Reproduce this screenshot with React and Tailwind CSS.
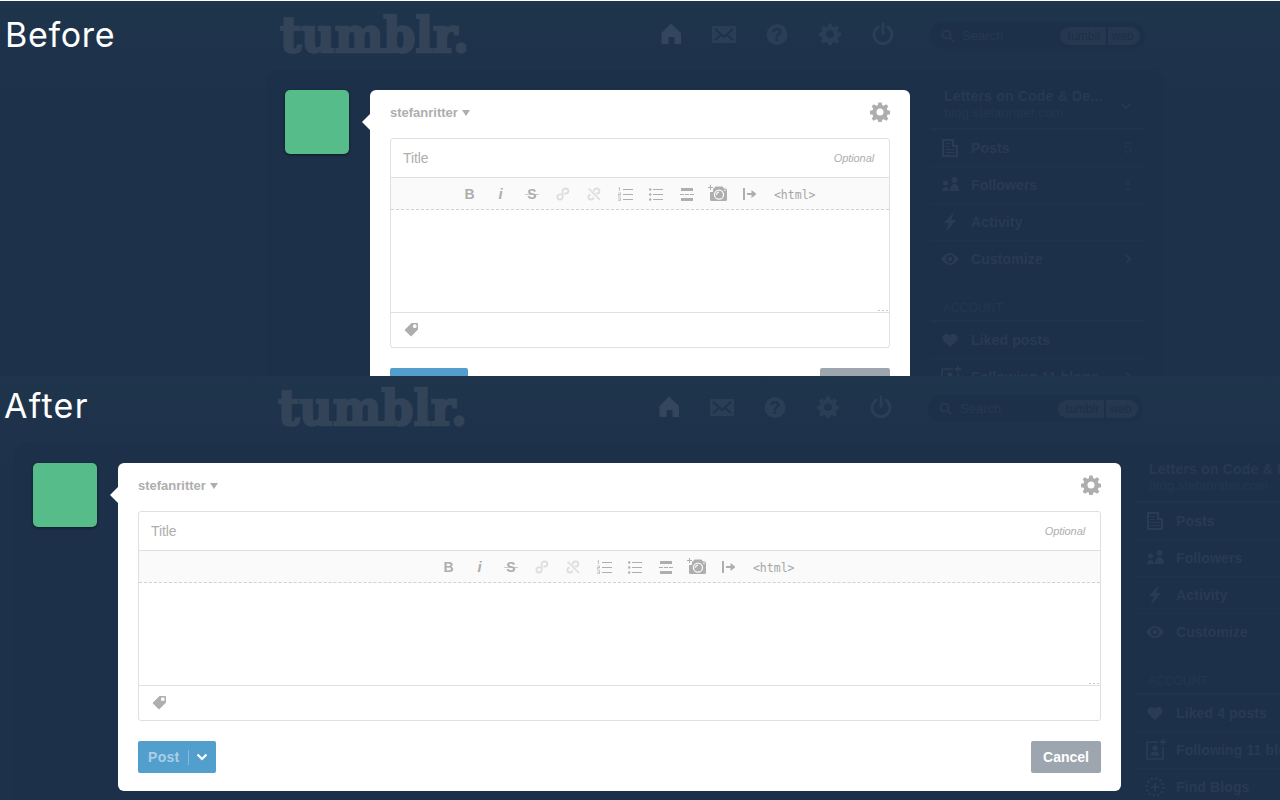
import React from "react";

const ink = "fill-[#2a3e56]";

function Svg({ w, h, className = "", children, viewBox }) {
  return (
    <svg width={w} height={h} viewBox={viewBox || `0 0 ${w} ${h}`} className={`block shrink-0 ${className}`}>
      {children}
    </svg>
  );
}

function Gear({ size, className }) {
  return (
    <Svg w={size} h={size} viewBox="-10 -10 20 20" className={className}>
      <path
        fillRule="evenodd"
        d="M-1.6-9.6h3.2l.6 2.8 1.5.6 2.5-1.6 2.1 2.1-1.5 2.5.6 1.5 2.8.6v3.2l-2.8.6-.6 1.5 1.5 2.5-2.1 2.1-2.5-1.6-1.5.6-.6 2.8h-3.2l-.6-2.8-1.5-.6-2.5 1.6-2.1-2.1 1.5-2.5-.6-1.5-2.8-.6v-3.2l2.8-.6.6-1.5-1.5-2.5 2.1-2.1 2.5 1.6 1.5-.6zM0-3.5a3.5 3.5 0 1 0 0 7a3.5 3.5 0 1 0 0-7z"
      />
    </Svg>
  );
}

function Header({ label, className, labelClass }) {
  return (
    <header className={`flex items-start ${className}`}>
      <h2 className={`w-[279px] shrink-0 text-[34px] leading-[44px] text-white font-['Inter',sans-serif] font-normal ${labelClass}`}>
        {label}
      </h2>
      <Svg w={192} h={60} className="fill-[#334459] stroke-[#334459]">
        <text x="1" y="51" textLength="189" lengthAdjust="spacingAndGlyphs" strokeWidth="2.400" className="text-[49px] font-bold font-['DejaVu_Serif',serif]">
          tumblr.
        </text>
      </Svg>
      <nav className="flex items-center ml-[188px] mt-[21px] h-6">
        <div className="w-[53px]">
          <Svg w={24} h={24} className="fill-[#34465d]">
            <path d="M12 1.500 22 11v11h-6.500v-7h-6v7H2.500V11z" />
          </Svg>
        </div>
        <div className="w-[53px]">
          <Svg w={24} h={24} className={ink}>
            <rect y="4" width="24" height="17" rx="1" />
            <path d="M3 7 12 15 21 7M3 18l6-5M21 18l-6-5" fill="none" stroke="#1e334b" strokeWidth="2" />
          </Svg>
        </div>
        <div className="w-[53px]">
          <Svg w={24} h={24} className={ink}>
            <circle cx="12" cy="12.500" r="10.500" />
            <text x="12" y="18.500" textAnchor="middle" className="fill-[#1e334b] text-[18px] font-bold font-['Liberation_Sans',sans-serif]">?</text>
          </Svg>
        </div>
        <div className="w-[53px] pl-px"><Gear size={22} className={ink} /></div>
        <Svg w={24} h={24} className="fill-none stroke-[#2a3e56]">
          <path d="M7.200 5a9 9 0 1 0 9.600 0M12 2v9.500" strokeWidth="2.900" strokeLinecap="round" />
        </Svg>
      </nav>
      <div className="ml-[35px] mt-[21px] flex h-[27px] w-[215px] shrink-0 items-center rounded-full bg-[#1d3049] pl-[11px] pr-[3px] font-['Liberation_Sans',sans-serif]">
        <Svg w={14} h={14} className="fill-none stroke-[#27394f]">
          <circle cx="5.500" cy="5.500" r="4" strokeWidth="2" />
          <path d="m8.500 8.500 4 4" strokeWidth="2.400" />
        </Svg>
        <span className="ml-[7px] flex-1 text-[13px] text-[#263950]">Search</span>
        <span className="flex h-[18px] w-[46px] items-center justify-center rounded-l-full bg-[#25384f] pl-[3px] text-[12px] text-[#1c2f48]">tumblr</span>
        <span className="ml-[2px] mr-[2px] flex h-[18px] w-[32px] items-center justify-center rounded-r-full bg-[#25384f] pr-[3px] text-[12px] text-[#1c2f48]">web</span>
      </div>
    </header>
  );
}

function Chain({ broken }) {
  return (
    <Svg w={14} h={14} className="fill-none stroke-[#dedede]">
      <path d="M5.500 7.300H3.700a2.600 2.600 0 1 0 2.900 2.600V4.100a2.900 2.600 0 1 1 2.900 2.600H8.300" strokeWidth="1.800" />
      {broken && (
        <>
          <path d="M.5 1.500 12.500 13.500" stroke="#fafafa" strokeWidth="4" />
          <path d="M1.500 1.500 13 13" strokeWidth="1.700" />
        </>
      )}
    </Svg>
  );
}

function Toolbar({ shift }) {
  const cell = "flex w-[31.1px] shrink-0 justify-center";
  return (
    <div className={`flex h-8 items-center border-b border-dashed border-[#d2d2d2] bg-[#fafafa] font-['Liberation_Sans',sans-serif] text-[14px] font-bold text-[#aeaeae] ${shift}`}>
      <span className={`${cell} pt-0.5`}>B</span>
      <span className={`${cell} pt-0.5 text-[15px] italic`}>i</span>
      <span className={cell}>
        <Svg w={14} h={14} className="fill-[#aeaeae]">
          <text x="7" y="12" textAnchor="middle" className="text-[14px] font-bold">S</text>
          <path d="M0 7h14v1H0z" opacity=".6" />
        </Svg>
      </span>
      <span className={cell}><Chain /></span>
      <span className={cell}><Chain broken /></span>
      <span className={cell}>
        <Svg w={15} h={14} className="fill-[#aeaeae]">
          <path d="M5 2h10v1H5zM5 7h10v1H5zM5 12h10v1H5z" />
          <path d="M0 1h1V0h1v4H1V1.500H0zM0 5.500h3V8H1v.7h2v.8H0V7h2v-.7H0zM0 10.500h3V14H0v-.8h2v-.6H0v-.7h2v-.6H0z" opacity=".7" />
        </Svg>
      </span>
      <span className={cell}>
        <Svg w={14} h={14} className="fill-[#aeaeae]">
          <path d="M4 2h10v1H4zM4 7h10v1H4zM4 12h10v1H4z" />
          <circle cx="1.200" cy="2.500" r="1.200" /><circle cx="1.200" cy="7.500" r="1.200" /><circle cx="1.200" cy="12.500" r="1.200" />
        </Svg>
      </span>
      <span className={`${cell} pt-px`}>
        <Svg w={14} h={13} className="fill-[#aeaeae]">
          <path d="M1 0h12v3H1zM1 10h12v3H1zM0 6h4v1H0zM5 6h4v1H5zM10 6h4v1h-4z" />
        </Svg>
      </span>
      <span className={cell}>
        <Svg w={20} h={17} className="fill-[#aeaeae]">
          <path d="M6 3.500 7.500 1.500h7L16 3.500h1.500q1.500 0 1.500 1.500v9.500q0 1.500-1.500 1.500h-14Q2 16 2 14.500V7h3V3.500z" />
          <path d="M0 2h2V0h1v2h2v1H3v2H2V3H0z" />
          <circle cx="11" cy="9.700" r="4.500" fill="none" stroke="#fafafa" strokeWidth="1.300" />
          <path d="M8.500 9.700A2.500 2.500 0 0 1 11 7.200" fill="none" stroke="#fafafa" strokeWidth="1.200" />
          <circle cx="17" cy="5.300" r=".8" fill="#fafafa" />
        </Svg>
      </span>
      <span className={cell}>
        <Svg w={14} h={14} className="fill-[#aeaeae]">
          <path d="M1 1h2v12H1zM5 6h4.500V3l5 4-5 4V8H5z" />
        </Svg>
      </span>
      <span className="ml-[9px] pt-0.5 font-['DejaVu_Sans_Mono',monospace] text-[11.5px] leading-[14px] font-normal text-[#a6a6a6]">&lt;html&gt;</span>
    </div>
  );
}

function Composer({ shift, className }) {
  return (
    <section className={`relative h-[328px] shrink-0 rounded-[6px] bg-white px-5 font-['Liberation_Sans',sans-serif] ${className}`}>
      <Svg w={8} h={16} className="absolute -left-2 top-6 fill-white"><path d="M8 0v16L0 8z" /></Svg>
      <div className="flex h-12 items-center justify-between pb-1">
        <span className="flex items-center gap-1 pt-0.5 text-[13px] font-bold text-[#aeaeae]">
          stefanritter
          <Svg w={8} h={6} className="fill-[#aeaeae]"><path d="M0 0h8L4 6z" /></Svg>
        </span>
        <Gear size={20} className="fill-[#aeaeae]" />
      </div>
      <div className="h-[210px] rounded-[3px] border border-[#e0e0e0]">
        <div className="flex h-[39px] items-center justify-between border-b border-[#e0e0e0] pl-3 pr-[15px] text-[#aeaeae]">
          <span className="text-[14px] tracking-[-0.1px]">Title</span>
          <span className="text-[11px] italic tracking-[-0.1px]">Optional</span>
        </div>
        <Toolbar shift={shift} />
        <div className="flex h-[103px] items-end justify-end border-b border-[#e0e0e0] pb-px">
          <Svg w={11} h={1} className="fill-[#c8c8c8]"><path d="M0 0h2v1H0zM4 0h2v1H4zM8 0h2v1H8z" /></Svg>
        </div>
        <div className="flex h-[34px] items-center pb-0.5 pl-[13px]">
          <Svg w={15} h={15} className="fill-[#aeaeae]">
            <path fillRule="evenodd" d="M.5 8 7.500 1H13q1 0 1 1v5.500L7 14.500zM10.800 2.300a1.900 1.900 0 1 0 0 3.800a1.900 1.900 0 1 0 0-3.800z" />
          </Svg>
        </div>
      </div>
      <div className="mt-5 flex justify-between text-[14px] font-bold">
        <button className="flex h-8 w-[78px] items-center rounded-[2px] bg-[#529ecc] pl-[10px] text-[#a9cfe6]">
          <span className="w-10 text-left tracking-[0.3px]">Post</span>
          <span className="h-[15px] w-px bg-[#86bbdb]" />
          <Svg w={12} h={8} className="ml-[7px] fill-none stroke-white"><path d="m1.500 1.500 4.500 4.500 4.500-4.500" strokeWidth="2.200" /></Svg>
        </button>
        <button className="h-8 w-[70px] rounded-[2px] bg-[#9da6af] text-white">Cancel</button>
      </div>
    </section>
  );
}

function SideIcon({ name }) {
  const shapes = {
    Posts: (<><path fillRule="evenodd" d="M2 1h12v6h4v12H2zM4 3v14h12V9h-4V3z" /><path d="M5.500 5h4v1h-4zM5.500 8h4v1h-4zM5.500 11h9v1h-9zM5.500 14h9v1h-9z" /></>),
    Followers: (<><circle cx="5.500" cy="8" r="2.500" /><circle cx="14.500" cy="5" r="3" /><path d="M2 16q0-4 3.500-4T9 16zM10 16q0-7 4.500-7t4.500 7z" /></>),
    Activity: <path d="M13 1 4 11h5l-3 8h1l9-11h-5l3-7z" />,
    Customize: (<><path fillRule="evenodd" d="M1 10q9-12 18 0q-9 12-18 0zM10 6a4 4 0 1 0 0 8a4 4 0 1 0 0-8z" /><circle cx="10" cy="10" r="2.200" /></>),
    Liked: <path d="M10 17C1 10 2 8 3 6q3-4 7-.5Q14 2 17 6c1 2 2 4-7 11z" />,
    Following: (<><path d="M13 2H2v17h16V7" fill="none" stroke="#293c53" strokeWidth="1.700" /><circle cx="10" cy="8" r="2.600" /><path d="M5.500 15.500q0-4 4.500-4t4.500 4zM17-1h1.700v2H21v1.700h-2.300V5H17V2.700h-2V1h2z" /></>),
    Find: (<><circle cx="10" cy="10" r="8.500" fill="none" stroke="#293c53" strokeWidth="2.500" strokeDasharray="2 2.450" /><path d="M9.200 6h1.600v3.200H14v1.600h-3.200V14H9.200v-3.200H6V9.200h3.200z" /></>),
  };
  return <Svg w={20} h={20} className="overflow-visible fill-[#293c53]">{shapes[name]}</Svg>;
}

function Chevron() {
  return <Svg w={8} h={12} className="fill-none stroke-[#263950]"><path d="m2 2 4 4-4 4" strokeWidth="2" /></Svg>;
}

function Item({ icon, children, extra, arrow, last }) {
  return (
    <li className={`flex h-[37px] items-center border-b pl-[10px] pr-[13px] text-[14px] font-bold tracking-[0.12px] text-[#283b52] ${last ? "border-transparent" : "border-[#1f334b]"}`}>
      <SideIcon name={icon} />
      <span className="ml-[11px] flex-1 whitespace-nowrap">{children}</span>
      <span className="font-normal text-[#23374f]">{extra}</span>
      {arrow && <Chevron />}
    </li>
  );
}

function Sidebar({ arrows, counts, liked, title, className }) {
  return (
    <aside className={`w-[215px] shrink-0 font-['Liberation_Sans',sans-serif] ${className}`}>
      <div className="flex h-[40px] items-start justify-between border-b-2 border-[#20354c] pl-[14px] pr-[13px]">
        <div className="-mt-0.5 whitespace-nowrap">
          <div className="text-[14px] font-bold leading-4 tracking-[0.2px] text-[#273a50]">{title}</div>
          <div className="text-[13px] leading-[17px] tracking-[0.1px] text-[#23374f]">blog.stefanritter.com</div>
        </div>
        {arrows && <Svg w={12} h={8} className="mt-[12px] fill-none stroke-[#263950]"><path d="m2 2 4 4 4-4" strokeWidth="2" /></Svg>}
      </div>
      <ul>
        <Item icon="Posts" extra={counts && "5"}>Posts</Item>
        <Item icon="Followers" extra={counts && "1"}>Followers</Item>
        <Item icon="Activity">Activity</Item>
        <Item icon="Customize" arrow={arrows} last>Customize</Item>
      </ul>
      <h3 className="flex h-[44px] items-end border-b-2 border-[#20354c] pb-[5px] pl-[13px] text-[12px] leading-[14px] tracking-[0.1px] text-[#23374f]">ACCOUNT</h3>
      <ul>
        <Item icon="Liked">{liked}</Item>
        <Item icon="Following" arrow={arrows}>Following 11 blogs</Item>
        <Item icon="Find">Find Blogs</Item>
      </ul>
    </aside>
  );
}

const avatar = "size-16 shrink-0 rounded-[5px] bg-[#56bc8a] shadow-[0_1px_3px_rgba(0,0,0,0.5)]";
const backdrop = "overflow-hidden bg-[linear-gradient(#1e354b_0px,#1e334b_45px,#1e314a_90px,#1e314a_100%)]";
const panel = "flex h-[400px] items-start rounded-t-[14px] bg-[#1d3049] pt-5";

export default function App() {
  return (
    <main className="h-[800px] w-[1280px] overflow-hidden border-t border-white bg-[#1e314a]">
      <section className={`h-[375px] ${backdrop}`}>
        <Header label="Before" className="h-[69px]" labelClass="pt-[12px] pl-[5px] tracking-[0.7px]" />
        <div className={`${panel} ml-[266px] w-[898px] pl-[19px]`}>
          <div className={avatar} />
          <Composer shift="pl-[63px]" className="ml-[21px] w-[540px]" />
          <Sidebar arrows counts liked="Liked posts" title="Letters on Code & De..." className="ml-5" />
        </div>
      </section>
      <section className={`h-[424px] ${backdrop}`}>
        <Header label="After" className="-ml-0.5 -mt-0.5 h-[69px]" labelClass="pt-[10px] pl-[6px] tracking-[1.3px]" />
        <div className={`${panel} ml-[14px] w-[1400px] pl-[19px]`}>
          <div className={avatar} />
          <Composer shift="pl-[294px]" className="ml-[21px] w-[1003px]" />
          <Sidebar liked="Liked 4 posts" title="Letters on Code & Design" className="ml-[14px]" />
        </div>
      </section>
    </main>
  );
}
